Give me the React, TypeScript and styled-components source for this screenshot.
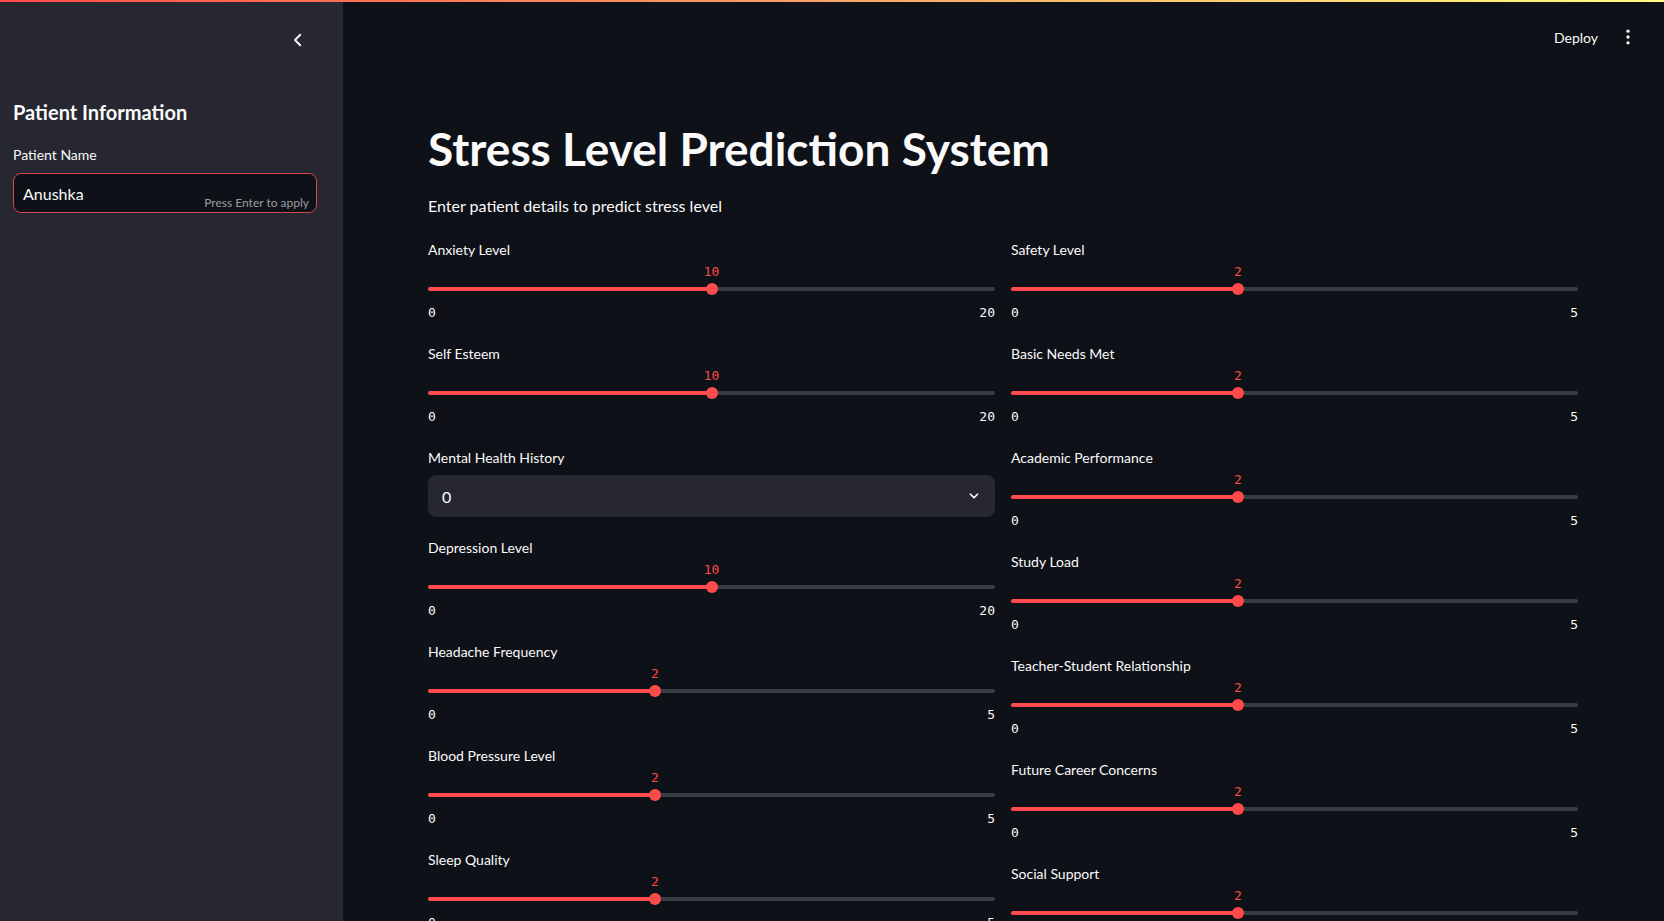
import React from "react";
import styled, { createGlobalStyle } from "styled-components";

const Global = createGlobalStyle`
  html, body { margin: 0; padding: 0; background: #0e1117; }
  body { font-family: Lato, "Noto Sans", sans-serif; color: #fafafa; }
  * { box-sizing: border-box; }
`;

const Page = styled.div`
  position: relative;
  display: flex;
  align-items: flex-start;
  width: 1664px;
  height: 921px;
  overflow: hidden;
  background: #0e1117;
`;

const Decoration = styled.div`
  position: absolute;
  top: 0;
  left: 0;
  right: 0;
  height: 2px;
  background: linear-gradient(90deg, #ff4b4b, #fffd80);
  z-index: 5;
`;

const Sidebar = styled.aside`
  width: 343px;
  height: 921px;
  flex: none;
  background: #262730;
  display: flex;
  flex-direction: column;
  padding: 0 26px 0 13px;
`;

const SidebarTop = styled.div`
  height: 80px;
  flex: none;
  display: flex;
  align-items: center;
  justify-content: flex-end;
  padding-right: 9px;
`;

const IconButton = styled.button`
  width: 20px;
  height: 20px;
  padding: 0;
  border: 0;
  background: transparent;
  color: #fafafa;
  display: flex;
  align-items: center;
  justify-content: center;
  cursor: pointer;
`;

const SideHeading = styled.h2`
  margin: 18px 0 0;
  font-size: 20px;
  line-height: 28px;
  font-weight: 700;
  color: #fafafa;
`;

const Label = styled.label`
  display: block;
  flex: none;
  font-size: 14px;
  line-height: 20px;
  color: #fafafa;
  height: 20px;
`;

const SideLabel = styled(Label)`
  margin-top: 19px;
`;

const TextInputBox = styled.div`
  position: relative;
  flex: none;
  margin-top: 8px;
  height: 40px;
  border: 1px solid #d3474d;
  border-radius: 8px;
  background: #0e1117;
  display: flex;
  align-items: center;
  padding: 0 9px;
  font-size: 16px;
  color: #fafafa;
`;

const InputHint = styled.span`
  position: absolute;
  right: 7px;
  bottom: 2px;
  font-size: 12px;
  color: rgba(250, 250, 250, 0.6);
`;

const Main = styled.main`
  flex: 1;
  display: flex;
  flex-direction: column;
  min-width: 0;
`;

const Header = styled.header`
  height: 74px;
  flex: none;
  display: flex;
  align-items: center;
  justify-content: flex-end;
  gap: 20px;
  padding-right: 26px;
`;

const HeaderLink = styled.span`
  font-size: 14px;
  color: #fafafa;
`;

const Content = styled.div`
  flex: none;
  padding: 48px 86px 0 85px;
`;

const Title = styled.h1`
  margin: 0;
  font-size: 46px;
  line-height: 53px;
  font-weight: 700;
  color: #fafafa;
`;

const Subtitle = styled.p`
  margin: 19px 0 0;
  font-size: 16px;
  line-height: 24px;
  color: #fafafa;
`;

const Columns = styled.div`
  margin-top: 22px;
  display: grid;
  grid-template-columns: 1fr 1fr;
  column-gap: 16px;
`;

const Column = styled.div`
  display: flex;
  flex-direction: column;
  gap: 16px;
`;

const Field = styled.div<{ $h: number }>`
  height: ${(p) => p.$h}px;
  flex: none;
  display: flex;
  flex-direction: column;
`;

const ValueRow = styled.div`
  position: relative;
  flex: none;
  height: 24px;
`;

const ThumbValue = styled.span`
  position: absolute;
  top: 2px;
  transform: translateX(-50%);
  font-family: "DejaVu Sans Mono", "Liberation Mono", monospace;
  font-size: 13px;
  line-height: 20px;
  color: #ff4b4b;
`;

const TrackRow = styled.div`
  position: relative;
  flex: none;
  height: 10px;
  display: flex;
  align-items: center;
`;

const Track = styled.div`
  position: relative;
  width: 100%;
  height: 4px;
  border-radius: 2px;
  background: #3a3c44;
`;

const Fill = styled.div`
  position: absolute;
  left: 0;
  top: 0;
  bottom: 0;
  border-radius: 2px;
  background: #ff4b4b;
`;

const Thumb = styled.div`
  position: absolute;
  top: 50%;
  width: 12px;
  height: 12px;
  border-radius: 50%;
  background: #ff4b4b;
  transform: translate(-50%, -50%);
`;

const Ticks = styled.div`
  flex: none;
  margin-top: 9px;
  height: 20px;
  display: flex;
  justify-content: space-between;
  font-family: "DejaVu Sans Mono", "Liberation Mono", monospace;
  font-size: 13px;
  line-height: 20px;
  color: #fafafa;
`;

const SelectBox = styled.div`
  flex: none;
  margin-top: 7px;
  height: 42px;
  border-radius: 8px;
  background: #262730;
  display: flex;
  align-items: center;
  justify-content: space-between;
  padding: 0 14px;
  font-size: 16px;
  color: #fafafa;
`;

type SliderProps = { label: string; min: number; max: number; value: number };

const Slider = ({ label, min, max, value }: SliderProps) => {
  const pct = ((value - min) / (max - min)) * 100;
  return (
    <Field $h={88}>
      <Label>{label}</Label>
      <ValueRow>
        <ThumbValue style={{ left: `${pct}%` }}>{value}</ThumbValue>
      </ValueRow>
      <TrackRow>
        <Track>
          <Fill style={{ width: `${pct}%` }} />
          <Thumb style={{ left: `${pct}%` }} />
        </Track>
      </TrackRow>
      <Ticks>
        <span>{min}</span>
        <span>{max}</span>
      </Ticks>
    </Field>
  );
};

const Select = ({ label, value }: { label: string; value: string }) => (
  <Field $h={74}>
    <Label>{label}</Label>
    <SelectBox>
      <span>{value}</span>
      <svg width="14" height="14" viewBox="0 0 24 24" fill="none" stroke="#fafafa" strokeWidth="3" strokeLinecap="round" strokeLinejoin="round">
        <path d="M6 9l6 6 6-6" />
      </svg>
    </SelectBox>
  </Field>
);

export default function App() {
  return (
    <>
      <Global />
      <Page>
        <Decoration />
        <Sidebar>
          <SidebarTop>
            <IconButton aria-label="Collapse sidebar">
              <svg width="18" height="18" viewBox="0 0 24 24" fill="none" stroke="#fafafa" strokeWidth="2.6" strokeLinecap="round" strokeLinejoin="round">
                <path d="M15 5l-7 7 7 7" />
              </svg>
            </IconButton>
          </SidebarTop>
          <SideHeading>Patient Information</SideHeading>
          <SideLabel>Patient Name</SideLabel>
          <TextInputBox>
            Anushka
            <InputHint>Press Enter to apply</InputHint>
          </TextInputBox>
        </Sidebar>
        <Main>
          <Header>
            <HeaderLink>Deploy</HeaderLink>
            <IconButton aria-label="Main menu">
              <svg width="20" height="20" viewBox="0 0 24 24" fill="#fafafa">
                <circle cx="12" cy="5" r="2" />
                <circle cx="12" cy="12" r="2" />
                <circle cx="12" cy="19" r="2" />
              </svg>
            </IconButton>
          </Header>
          <Content>
            <Title>Stress Level Prediction System</Title>
            <Subtitle>Enter patient details to predict stress level</Subtitle>
            <Columns>
              <Column>
                <Slider label="Anxiety Level" min={0} max={20} value={10} />
                <Slider label="Self Esteem" min={0} max={20} value={10} />
                <Select label="Mental Health History" value="0" />
                <Slider label="Depression Level" min={0} max={20} value={10} />
                <Slider label="Headache Frequency" min={0} max={5} value={2} />
                <Slider label="Blood Pressure Level" min={0} max={5} value={2} />
                <Slider label="Sleep Quality" min={0} max={5} value={2} />
              </Column>
              <Column>
                <Slider label="Safety Level" min={0} max={5} value={2} />
                <Slider label="Basic Needs Met" min={0} max={5} value={2} />
                <Slider label="Academic Performance" min={0} max={5} value={2} />
                <Slider label="Study Load" min={0} max={5} value={2} />
                <Slider label="Teacher-Student Relationship" min={0} max={5} value={2} />
                <Slider label="Future Career Concerns" min={0} max={5} value={2} />
                <Slider label="Social Support" min={0} max={5} value={2} />
              </Column>
            </Columns>
          </Content>
        </Main>
      </Page>
    </>
  );
}
